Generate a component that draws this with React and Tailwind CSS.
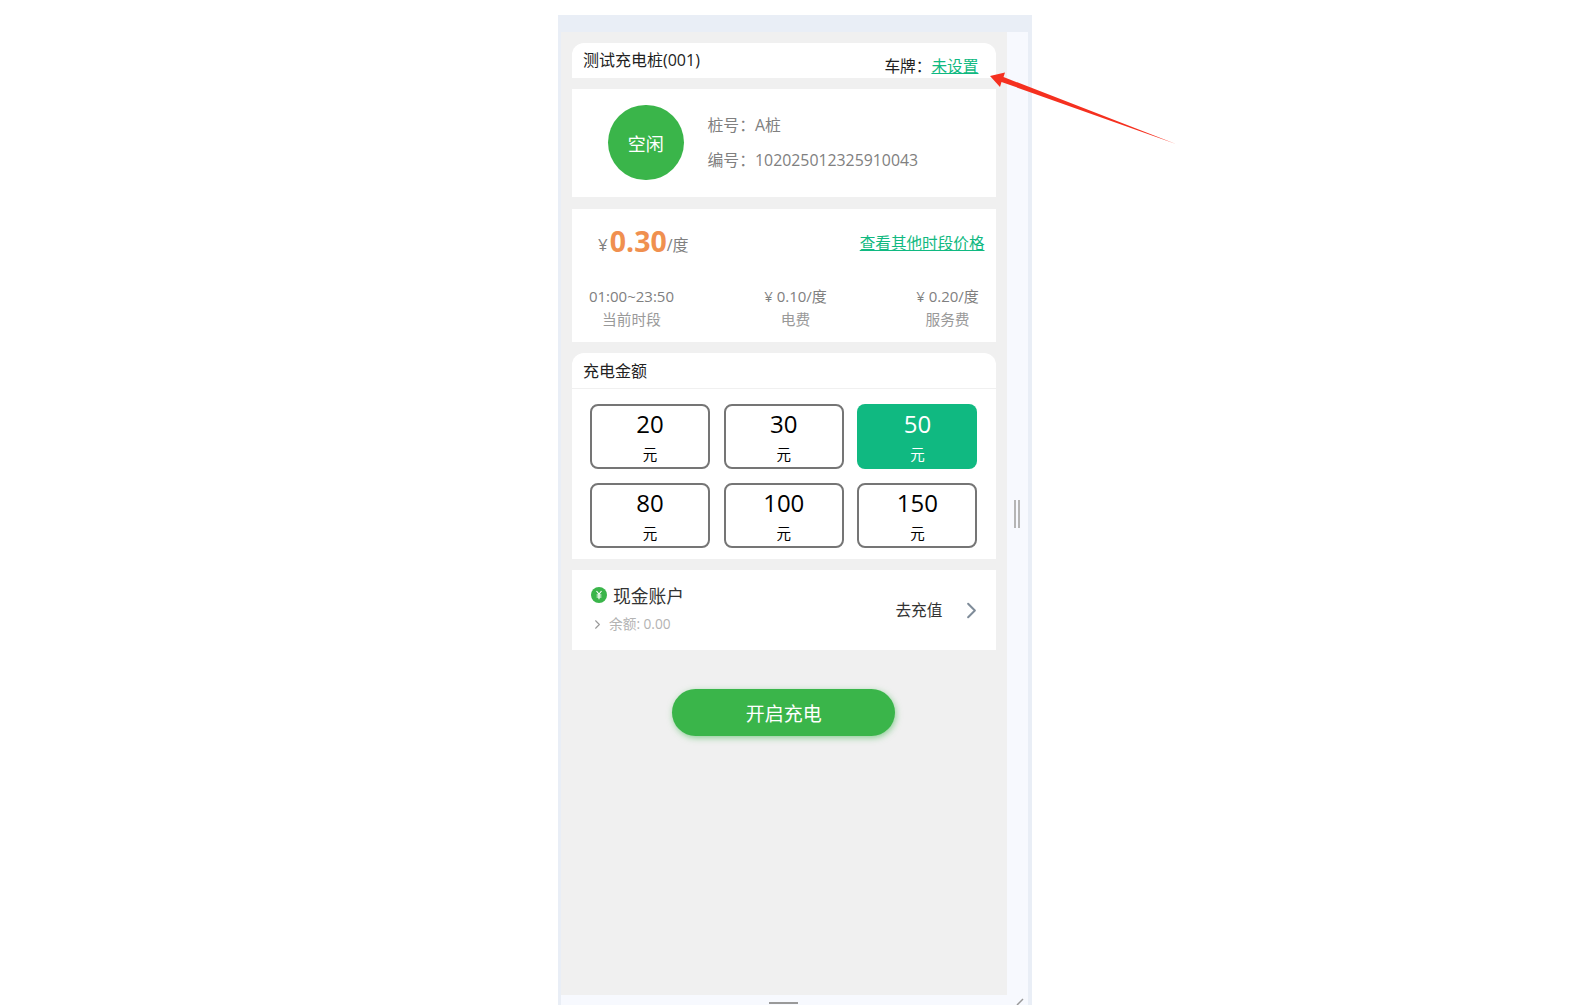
import { ChevronRight } from "lucide-react";

const amounts = ["20", "30", "50", "80", "100", "150"];

function Tile({ value, active }) {
  return (
    <div
      className={
        active
          ? "h-[64.5px] rounded-lg bg-[#10b981] text-white flex flex-col items-center"
          : "h-[64.5px] rounded-lg border-2 border-[#757575] bg-white text-black flex flex-col items-center"
      }
    >
      <div className={active ? "text-[24px] leading-[30px] mt-[5px]" : "text-[24px] leading-[30px] mt-[3px]"}>{value}</div>
      <div className="text-[14.5px] leading-5 mt-[6px]">元</div>
    </div>
  );
}

function PriceCol({ top, bottom, className }) {
  return (
    <div className={"flex flex-col items-center whitespace-nowrap " + className}>
      <div className="text-[15px] leading-[24px] text-[#808080]">{top}</div>
      <div className="text-[14.7px] leading-[22px] text-[#999]">{bottom}</div>
    </div>
  );
}

export default function App() {
  return (
    <div
      className="relative w-full h-[1005px] overflow-hidden bg-white pl-[558px] pt-[15px]"
      style={{ fontFamily: '"Open Sans", "Noto Sans CJK SC", sans-serif' }}
    >
      <div className="w-[473.5px] h-[990px] flex flex-col bg-[#f7f9fe]">
        <div className="h-[17px] bg-[#e9eef6]"></div>
        <div className="flex flex-1">
          <div className="w-[3px] bg-[#e9eef6]"></div>
          <div className="w-[445.5px] h-[963px] bg-[#f0f0f0] pl-[11px] pt-[11px]">
            <div className="w-[423.5px] flex flex-col">
              <div className="h-[35px] bg-white rounded-t-xl flex justify-between pl-[11px] pr-[17px]">
                <div className="text-[16px] leading-5 mt-[7px] text-[#222]">测试充电桩(001)</div>
                <div className="text-[15.7px] leading-5 mt-[13px] text-[#222]">
                  车牌：<span className="text-[#10b981] underline">未设置</span>
                </div>
              </div>

              <div className="h-[108px] mt-[11px] bg-white flex items-center pl-9">
                <div className="w-[75.5px] h-[75.5px] -mt-[1px] pt-[3px] rounded-full bg-[#3ab54a] text-white text-[18px] flex items-center justify-center">
                  空闲
                </div>
                <div className="ml-6 -mt-[2px] text-[15.85px] text-[#808080]">
                  <div className="leading-6">桩号：A桩</div>
                  <div className="leading-6 mt-[11px]">编号：102025012325910043</div>
                </div>
              </div>

              <div className="h-[133px] mt-3 bg-white">
                <div className="h-[75px] flex justify-between items-start pl-[26px] pr-[11px]">
                  <div className="flex items-baseline mt-[11px] h-10">
                    <span className="text-[17px] leading-none text-[#808080] mr-[2px]">¥</span>
                    <span className="text-[28.5px] font-bold leading-10 translate-y-[1px] text-[#f0904f]">0.30</span>
                    <span className="text-[16px] text-[#808080]">/度</span>
                  </div>
                  <div className="text-[15.6px] leading-5 mt-6 text-[#10b981] underline">查看其他时段价格</div>
                </div>
                <div className="flex pl-[16px]">
                  <PriceCol top="01:00~23:50" bottom="当前时段" className="w-[87px]" />
                  <PriceCol top="¥ 0.10/度" bottom="电费" className="w-[62px] ml-[89.5px]" />
                  <PriceCol top="¥ 0.20/度" bottom="服务费" className="w-[62px] ml-[90px]" />
                </div>
              </div>

              <div className="h-[205.5px] mt-[11px] bg-white rounded-t-xl">
                <div className="h-[36px] border-b border-[#f0f0f0] pl-[11px] flex items-center text-[16px] text-[#222]">
                  充电金额
                </div>
                <div className="grid grid-cols-3 gap-x-[13.5px] gap-y-[14.5px] pt-[15px] px-[18px]">
                  {amounts.map((a) => (
                    <Tile key={a} value={a} active={a === "50"} />
                  ))}
                </div>
              </div>

              <div className="h-20 mt-[11.5px] bg-white flex items-center justify-between pl-[19px] pr-[17px]">
                <div className="flex flex-col -mt-[3px]">
                  <div className="flex items-center h-[26px]">
                    <svg width="16" height="16" viewBox="0 0 16 16" className="-mt-[3px]">
                      <circle cx="8" cy="8" r="8" fill="#3ab54a" />
                      <path d="M5.5 4 8 7.2 10.5 4M8 7.2V12.2M5.6 8H10.4M5.6 10H10.4" fill="none" stroke="#fff" strokeWidth="1.1" />
                    </svg>
                    <span className="ml-[6px] text-[17.8px] text-[#333]">现金账户</span>
                  </div>
                  <div className="flex items-center h-[20px] mt-[5px] text-[13.7px] text-[#b3b3b3]">
                    <ChevronRight size={15} strokeWidth={1.7} className="-ml-[1px] text-[#999]" />
                    <span className="ml-[4px]">余额: 0.00</span>
                  </div>
                </div>
                <div className="flex items-center">
                  <span className="text-[15.7px] mt-[2px] text-[#333]">去充值</span>
                  <ChevronRight size={27} strokeWidth={1.8} className="ml-[15px] -mr-[6px] text-[#7f8c99]" />
                </div>
              </div>

              <div className="flex justify-center mt-[39px]">
                <div className="w-[223px] h-[47px] pt-1 rounded-full bg-[#3ab54a] text-white text-[19px] flex items-center justify-center shadow-[1px_2px_6px_rgba(58,181,74,0.55)]">
                  开启充电
                </div>
              </div>
            </div>
          </div>
          <div className="w-[21px] flex items-start justify-center pt-[468px] gap-[2px]">
            <div className="w-[2px] h-[28px] bg-[#b5b5b5]"></div>
            <div className="w-[2px] h-[28px] bg-[#b5b5b5]"></div>
          </div>
          <div className="w-[4px] bg-[#e9eef6]"></div>
        </div>
      </div>

      {/* window handles at the bottom edge */}
      <div className="absolute left-[769px] top-[1002px] w-[29px] h-[2px] bg-[#999]"></div>
      <svg className="absolute left-[1014px] top-[996px]" width="12" height="9" viewBox="0 0 12 9">
        <path d="M3 9 9 3" stroke="#999" strokeWidth="1.5" fill="none" />
      </svg>

      {/* red annotation arrow */}
      <svg className="absolute left-0 top-0 pointer-events-none" width="1569" height="1005" viewBox="0 0 1569 1005">
        <polygon points="990,76 1005,72.5 1003.5,77 1176,144 1001.5,82 1000,87" fill="#f5301f" />
      </svg>
    </div>
  );
}
